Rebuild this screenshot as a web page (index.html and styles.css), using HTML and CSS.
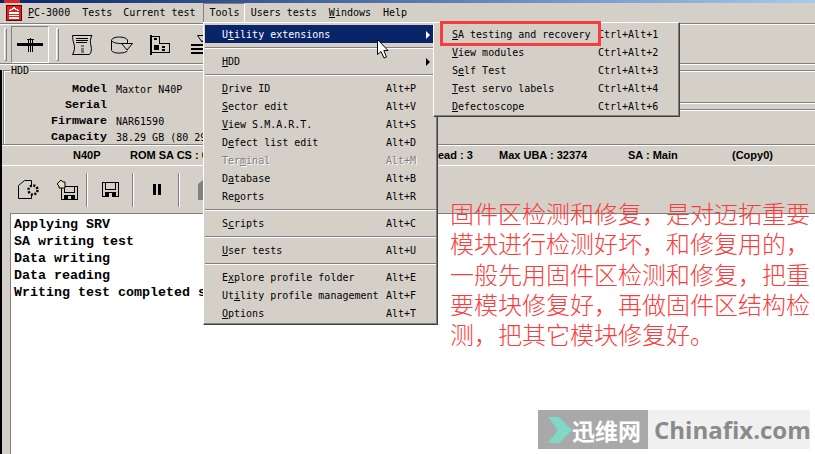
FILE: index.html
```html
<!DOCTYPE html>
<html>
<head>
  <title>PC-3000</title>
  <link rel="stylesheet" href="styles.css">
</head>
<body>
  <div class="titlebar"><span class="title-icon"></span></div>

  <div class="menubar">
    <svg class="logo" width="16" height="16" viewBox="0 0 16 16" shape-rendering="crispEdges">
      <rect x="0.5" y="0.5" width="15" height="15" fill="#e0201c" stroke="#600"/>
      <path d="M8 2L14 6H12L8 4L4 6H2Z" fill="#fff"/>
      <rect x="3" y="7" width="10" height="2" fill="#fff"/>
      <rect x="3" y="10" width="10" height="1" fill="#fff"/>
      <rect x="3" y="12" width="10" height="2" fill="#fff"/>
    </svg>
    <span class="menu-item"><u>P</u>C-3000</span>
    <span class="menu-item menu-tests">Tests</span>
    <span class="menu-item">Current test</span>
    <span class="menu-item menu-open">Tools</span>
    <span class="menu-item">Users tests</span>
    <span class="menu-item"><u>W</u>indows</span>
    <span class="menu-item">Help</span>
  </div>

  <div class="toolbar">
    <span class="handle"></span>
    <span class="tool-pressed">
      <svg width="26" height="14" viewBox="0 0 26 14" shape-rendering="crispEdges">
        <rect x="0" y="5" width="26" height="3" fill="#000"/>
        <rect x="11" y="1" width="1" height="13" fill="#000"/>
        <rect x="13" y="0" width="1" height="14" fill="#000"/>
        <rect x="15" y="1" width="1" height="13" fill="#000"/>
        <rect x="10" y="1" width="7" height="1" fill="#000"/>
      </svg>
    </span>
    <span class="handle handle-2"></span>
    <span class="tool">
      <svg width="22" height="22" viewBox="0 0 22 22">
        <path d="M1.5 1.5H21C19 5 19 8 20 12C21 16 20 19 18.5 20.5H1.5C3.5 17 4 14 3 10C2 7 1.5 4 1.5 1.5Z" fill="none" stroke="#000"/>
        <path d="M5 4.5H17M5 6.5H17M5 8.5H16" stroke="#000"/>
        <rect x="10" y="11" width="3" height="2" fill="#777"/>
        <rect x="10" y="14" width="3" height="5" fill="#777"/>
      </svg>
    </span>
    <span class="tool">
      <svg width="25" height="18" viewBox="0 0 25 18">
        <path d="M3.5 4.5V14C3.5 16 8 17.5 12 17C16 17 18 16 19.500 15M3.5 4.500C3.500 2.500 7 1 11.500 1C15 1 18.500 2 19.500 4V7" fill="none" stroke="#000"/>
        <path d="M3.500 4.500C5 7 9 7.500 14 7.500" fill="none" stroke="#000"/>
        <path d="M13.500 7.500H24.500L19 14Z" fill="#d4d0c8" stroke="#000"/>
      </svg>
    </span>
    <span class="tool">
      <svg width="20" height="20" viewBox="0 0 20 20" shape-rendering="crispEdges">
        <rect x="0" y="0" width="2" height="20" fill="#000"/>
        <rect x="2" y="1" width="8" height="1" fill="#000"/>
        <rect x="9" y="1" width="1" height="8" fill="#000"/>
        <rect x="2" y="17" width="18" height="1" fill="#000"/>
        <rect x="19" y="8" width="1" height="10" fill="#000"/>
        <rect x="10" y="8" width="10" height="1" fill="#000"/>
        <rect x="4" y="3" width="3" height="2" fill="#000"/>
        <rect x="4" y="10" width="5" height="5" fill="#000"/>
        <rect x="12" y="11" width="3" height="2" fill="#000"/>
        <rect x="12" y="14" width="3" height="2" fill="#000"/>
      </svg>
    </span>
    <span class="tool">
      <svg width="16" height="19" viewBox="0 0 16 19">
        <path d="M6.500 0.500H15.500L11 7Z" fill="none" stroke="#000"/>
        <rect x="0" y="9" width="16" height="2" fill="#000"/>
        <rect x="0" y="13" width="16" height="2" fill="#000"/>
        <rect x="0" y="17" width="16" height="2" fill="#000"/>
      </svg>
    </span>
  </div>

  <div class="main">
    <div class="hdd">
      <span class="hdd-title">HDD</span>
      <div class="hdd-info">
        <span class="hdd-label">Model</span><span class="hdd-value">Maxtor N40P</span>
        <span class="hdd-label">Serial</span><span class="hdd-value"></span>
        <span class="hdd-label">Firmware</span><span class="hdd-value">NAR61590</span>
        <span class="hdd-label">Capacity</span><span class="hdd-value">38.29 GB (80 29</span>
      </div>
      <div class="hdd-side">
        <div class="side-top"></div>
        <div class="side-bottom"></div>
      </div>
    </div>

    <div class="status">
      <span>N40P</span>
      <span>ROM SA CS : 0</span>
      <span class="status-head">ead : 3</span>
      <span>Max UBA : 32374</span>
      <span>SA : Main</span>
      <span>(Copy0)</span>
    </div>

    <div class="toolbar2">
      <span class="tool2">
        <svg width="21" height="19" viewBox="0 0 21 19">
          <path d="M6.500 0.500H13.500V18.500H0.500V5.500Z" fill="none" stroke="#000"/>
          <circle cx="15" cy="10" r="4.500" fill="#d4d0c8" stroke="#000" stroke-width="2.500" stroke-dasharray="2 1.500"/>
        </svg>
      </span>
      <span class="tool2">
        <svg width="21" height="20" viewBox="0 0 21 20" shape-rendering="crispEdges">
          <path d="M4.500 6.500H20.500V19.500H4.500Z" fill="none" stroke="#000"/>
          <path d="M7.500 7V12.500H17.500V7" fill="none" stroke="#000"/>
          <rect x="7" y="15" width="11" height="4" fill="#000"/>
          <rect x="11" y="16" width="3" height="3" fill="#d4d0c8"/>
          <path d="M0 4L4 0L6 2L8 2L8 8L2 8L2 6Z" fill="#e8dcc0" stroke="#000" stroke-width="1" shape-rendering="auto"/>
        </svg>
      </span>
      <span class="sep"></span>
      <span class="tool3">
        <svg width="17" height="15" viewBox="0 0 17 15" shape-rendering="crispEdges">
          <path d="M0.500 0.500H16.500V14.500H0.500Z" fill="none" stroke="#000"/>
          <path d="M3.500 1V7.500H13.500V1" fill="none" stroke="#000"/>
          <rect x="3" y="10" width="11" height="5" fill="#000"/>
          <rect x="7" y="11" width="3" height="4" fill="#d4d0c8"/>
        </svg>
      </span>
      <span class="sep"></span>
      <span class="tool3">
        <svg width="8" height="11" viewBox="0 0 8 11" shape-rendering="crispEdges">
          <rect x="0" y="0" width="3" height="11" fill="#000"/>
          <rect x="5" y="0" width="3" height="11" fill="#000"/>
        </svg>
      </span>
      <span class="sep"></span>
      <span class="tool3">
        <svg width="10" height="20" viewBox="0 0 10 20">
          <path d="M0 4L5 0H10V20H0Z" fill="#808080"/>
        </svg>
      </span>
    </div>

    <div class="log">
      <div>Applying SRV</div>
      <div>SA writing test</div>
      <div>Data writing</div>
      <div>Data reading</div>
      <div>Writing test completed s</div>
    </div>
  </div>

  <div class="popup tools-menu">
    <div class="row row-active"><span class="row-label">U<u>t</u>ility extensions</span><span class="arrow arrow-white"></span></div>
    <div class="row-sep"></div>
    <div class="row"><span class="row-label"><u>H</u>DD</span><span class="arrow"></span></div>
    <div class="row-sep"></div>
    <div class="row"><span class="row-label"><u>D</u>rive ID</span><span>Alt+P</span></div>
    <div class="row"><span class="row-label"><u>S</u>ector edit</span><span>Alt+V</span></div>
    <div class="row"><span class="row-label"><u>V</u>iew S.M.A.R.T.</span><span>Alt+S</span></div>
    <div class="row"><span class="row-label">D<u>e</u>fect list edit</span><span>Alt+D</span></div>
    <div class="row row-disabled"><span class="row-label">Ter<u>m</u>inal</span><span>Alt+M</span></div>
    <div class="row"><span class="row-label">D<u>a</u>tabase</span><span>Alt+B</span></div>
    <div class="row"><span class="row-label">Re<u>p</u>orts</span><span>Alt+R</span></div>
    <div class="row-sep"></div>
    <div class="row"><span class="row-label">S<u>c</u>ripts</span><span>Alt+C</span></div>
    <div class="row-sep"></div>
    <div class="row"><span class="row-label"><u>U</u>ser tests</span><span>Alt+U</span></div>
    <div class="row-sep"></div>
    <div class="row"><span class="row-label">E<u>x</u>plore profile folder</span><span>Alt+E</span></div>
    <div class="row"><span class="row-label">Ut<u>i</u>lity profile management</span><span>Alt+F</span></div>
    <div class="row"><span class="row-label"><u>O</u>ptions</span><span>Alt+T</span></div>
  </div>

  <div class="popup sub-menu">
    <div class="row"><span class="row-label"><u>S</u>A testing and recovery</span><span>Ctrl+Alt+1</span></div>
    <div class="row"><span class="row-label"><u>V</u>iew modules</span><span>Ctrl+Alt+2</span></div>
    <div class="row"><span class="row-label">S<u>e</u>lf Test</span><span>Ctrl+Alt+3</span></div>
    <div class="row"><span class="row-label"><u>T</u>est servo labels</span><span>Ctrl+Alt+4</span></div>
    <div class="row"><span class="row-label"><u>D</u>efectoscope</span><span>Ctrl+Alt+6</span></div>
  </div>

  <div class="red-box"></div>

  <svg class="cursor" width="13" height="21" viewBox="0 0 13 21">
    <path d="M1.500 1.500V16.500L5 13.500L8 20L10.500 19L7.800 12.500H12Z" fill="#fff" stroke="#000"/>
  </svg>

  <div class="note">
    固件区检测和修复，是对迈拓重要<br>
    模块进行检测好坏，和修复用的，<br>
    一般先用固件区检测和修复，把重<br>
    要模块修复好，再做固件区结构检<br>
    测，把其它模块修复好。
  </div>

  <div class="watermark">
    <div class="wm-left">
      <svg width="24" height="26" viewBox="0 0 24 26"><path d="M0 0H11L24 13L11 26H0L10 13Z" fill="#7fd8c8"/></svg>
      <span>迅维网</span>
    </div>
    <div class="wm-right">Chinafix.com</div>
  </div>
</body>
</html>
```

FILE: styles.css
```css
html, body {
  margin: 0;
  padding: 0;
}

body {
  position: relative;
  width: 815px;
  height: 454px;
  overflow: hidden;
  background-color: #d4d0c8;
  font-family: "DejaVu Sans Mono", "Noto Sans CJK SC", monospace;
  font-size: 10px;
  color: #000;
}

u {
  text-underline-offset: 1px;
}

.titlebar {
  height: 3px;
  padding-left: 4px;
  background: linear-gradient(to right, #0a246a, #a6caf0);
  overflow: hidden;
}

.title-icon {
  display: block;
  width: 16px;
  height: 3px;
  background-color: #d8282c;
}

/* menu bar */
.menubar {
  display: flex;
  align-items: center;
  height: 20px;
  padding-left: 6px;
}

.logo {
  margin-right: 0;
  flex: none;
}

.menu-item {
  padding: 0 6px;
  line-height: 18px;
}

.menu-tests {
  padding-right: 5px;
}

.menu-open {
  margin-left: 1px;
  padding: 0 4px 0 6px;
  border: 1px solid;
  border-color: #808080 #fff #fff #808080;
}

/* top toolbar */
.toolbar {
  display: flex;
  align-items: center;
  box-sizing: border-box;
  height: 47px;
  padding: 2px 0 7px 4px;
  border-top: 1px solid #808080;
  box-shadow: inset 0 1px 0 #fff;
  position: relative;
}

.toolbar::after {
  content: "";
  position: absolute;
  left: 0;
  right: 0;
  top: 39px;
  height: 1px;
  background-color: #808080;
  box-shadow: 0 1px 0 #fff;
}

.handle {
  flex: none;
  box-sizing: border-box;
  width: 3px;
  height: 33px;
  border: 1px solid;
  border-color: #fff #808080 #808080 #fff;
}

.handle-2 {
  margin-left: 7px;
  margin-right: 3px;
}

.tool-pressed {
  flex: none;
  display: flex;
  align-items: center;
  justify-content: center;
  box-sizing: border-box;
  width: 38px;
  height: 37px;
  margin-left: 4px;
  border: 1px solid;
  border-color: #808080 #fff #fff #808080;
}

.tool {
  flex: none;
  display: flex;
  justify-content: center;
  width: 39px;
}

/* everything under the first toolbar */
.main {
  border-left: 2px solid #000;
  height: 384px;
  display: flex;
  flex-direction: column;
}

.hdd {
  display: flex;
  position: relative;
  box-sizing: border-box;
  height: 74px;
  margin-left: 1px;
  border-top: 1px solid #808080;
  border-left: 1px solid #808080;
  box-shadow: inset 1px 1px 0 #fff;
}

.hdd-title {
  position: absolute;
  left: 6px;
  top: -6px;
  padding: 0 1px;
  background-color: #d4d0c8;
  line-height: 12px;
}

.hdd-info {
  display: grid;
  grid-template-columns: 103px 1fr;
  grid-auto-rows: 16px;
  column-gap: 9px;
  align-items: center;
  width: 430px;
  padding-top: 10px;
  flex: none;
}

.hdd-label {
  text-align: right;
  font-family: "Liberation Mono", monospace;
  font-weight: bold;
  font-size: 11.67px;
}

.hdd-side {
  flex: 1;
}

.side-top {
  height: 31px;
  border-bottom: 1px solid #808080;
  box-shadow: 0 1px 0 #fff;
}

.side-bottom {
  margin-top: 6px;
  border-top: 1px solid #808080;
  box-shadow: inset 0 1px 0 #fff;
  height: 2px;
}

.status {
  display: grid;
  grid-template-columns: 57px 308px 61px 129px 104px 1fr;
  align-items: center;
  box-sizing: border-box;
  height: 22px;
  padding-left: 71px;
  border-top: 1px solid #808080;
  border-bottom: 1px solid #fff;
  box-shadow: inset 0 1px 0 #fff;
  font-family: "Liberation Sans", sans-serif;
  font-weight: bold;
  font-size: 11px;
  white-space: nowrap;
}

.toolbar2 {
  display: flex;
  align-items: center;
  height: 47px;
  flex: none;
  padding-left: 7px;
}

.tool2 {
  flex: none;
  display: flex;
  justify-content: center;
  width: 39px;
}

.tool3 {
  flex: none;
  display: flex;
  justify-content: center;
  width: 45px;
}

.sep {
  flex: none;
  width: 2px;
  height: 34px;
  margin-left: -1px;
  background-color: #808080;
  border-right: 1px solid #fff;
  box-sizing: border-box;
}

.log {
  flex: 1;
  margin-left: 8px;
  padding: 2px 0 0 3px;
  background-color: #fff;
  border-top: 1px solid #808080;
  border-left: 1px solid #808080;
  font-family: "Liberation Mono", monospace;
  font-weight: bold;
  font-size: 13.33px;
  line-height: 17px;
  white-space: nowrap;
}

/* dropdown menus sit over the window */
.popup {
  position: absolute;
  top: 22px;
  box-sizing: border-box;
  padding: 2px 1px;
  background-color: #d4d0c8;
  border: 1px solid;
  border-color: #fff #404040 #404040 #fff;
  box-shadow: inset -1px -1px 0 #808080;
}

.tools-menu {
  left: 203px;
  width: 235px;
  height: 303px;
}

.sub-menu {
  left: 433px;
  width: 247px;
  height: 95px;
}

.row {
  display: flex;
  align-items: center;
  height: 17px;
  padding: 1px 0 0 17px;
  white-space: nowrap;
}

.tools-menu .row-label {
  width: 164px;
}

.sub-menu .row-label {
  width: 146px;
}

.row-active {
  background-color: #0a246a;
  color: #fff;
}

.row-disabled {
  color: #808080;
  text-shadow: 1px 1px 0 #fff;
}

.row-sep {
  height: 1px;
  margin: 4px 0 4px;
  background-color: #808080;
  box-shadow: 0 1px 0 #fff;
}

.arrow {
  margin-left: auto;
  margin-right: 6px;
  border-left: 4px solid #000;
  border-top: 4px solid transparent;
  border-bottom: 4px solid transparent;
}

.arrow-white {
  border-left-color: #fff;
}

.red-box {
  position: absolute;
  left: 440px;
  top: 21px;
  width: 155px;
  height: 19px;
  border: 3px solid #fb3c3c;
}

.cursor {
  position: absolute;
  left: 376px;
  top: 38px;
}

.note {
  position: absolute;
  left: 450px;
  top: 198px;
  width: 365px;
  font-family: "Noto Sans CJK SC", sans-serif;
  font-size: 24px;
  font-weight: 300;
  line-height: 30.3px;
  color: #fb3c3c;
  white-space: nowrap;
}

.watermark {
  position: absolute;
  left: 538px;
  top: 410px;
  display: flex;
  height: 39px;
}

.wm-left {
  display: flex;
  align-items: center;
  box-sizing: border-box;
  width: 110px;
  padding-left: 10px;
  background-color: #a9a9a9;
  font-family: "Noto Sans CJK SC", sans-serif;
  font-weight: bold;
  font-size: 23px;
  color: #fff;
}

.wm-right {
  width: 162px;
  padding-left: 6px;
  box-sizing: border-box;
  background-color: #f0f0f0;
  font-family: "Open Sans", sans-serif;
  font-weight: bold;
  font-size: 24px;
  line-height: 39px;
  color: #8a8a8a;
  white-space: nowrap;
  overflow: hidden;
}
```
